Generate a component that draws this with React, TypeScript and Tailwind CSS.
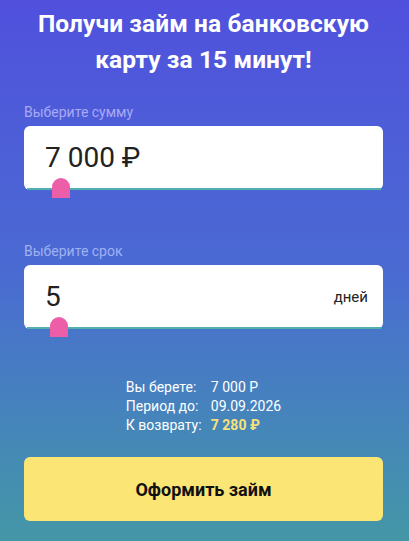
import React from 'react';

const font = { fontFamily: 'Roboto, "Noto Sans", sans-serif' };

function SliderCard({ value, suffix, handleX }: { value: string; suffix?: string; handleX: string }) {
  return (
    <div className="relative h-16 rounded-md bg-white flex items-center justify-between pl-[21px] pr-[15px]">
      <span className="text-[28px] leading-none text-[#222]">{value}</span>
      {suffix && <span className="text-[15px] text-[#222]">{suffix}</span>}
      <div className="absolute left-[3px] right-[2px] bottom-0 h-[2px] bg-[#4fb0ae]" />
      <div className={`absolute ${handleX} -bottom-[8px] w-[18px] h-[20px] rounded-t-full bg-[#ec5ea8]`} />
    </div>
  );
}

export default function App() {
  return (
    <div
      className="w-[409px] h-[541px] overflow-hidden bg-gradient-to-b from-[#5050dd] via-[#4a6ad2] to-[#4497a6] pl-6 pr-[26px] pt-[6px]"
      style={font}
    >
      <h1 className="text-white font-bold text-[24.5px] leading-[36px] text-center tracking-[0.1px]">
        Получи займ на банковскую
        <br />
        карту за 15 минут!
      </h1>

      <div className="mt-6 text-[14px] leading-5 text-[#a7aaf6]">Выберите сумму</div>
      <div className="mt-1">
        <SliderCard value="7 000 ₽" handleX="left-[28px]" />
      </div>

      <div className="mt-[51px] text-[14px] leading-5 text-[#9fb2f2]">Выберите срок</div>
      <div className="mt-1">
        <SliderCard value="5" suffix="дней" handleX="left-[26px]" />
      </div>

      <div className="mt-[49px] flex justify-center">
        <div className="grid grid-cols-[85px_auto] text-[14px] leading-[19px] text-white">
          <span>Вы берете:</span>
          <span>7 000 Р</span>
          <span>Период до:</span>
          <span>09.09.2026</span>
          <span>К возврату:</span>
          <span className="font-bold text-[#f6e17a]">7 280 ₽</span>
        </div>
      </div>

      <button className="mt-[22px] w-full h-16 rounded-md bg-[#fbe574] text-[18px] font-bold text-[#111]">
        Оформить займ
      </button>
    </div>
  );
}
